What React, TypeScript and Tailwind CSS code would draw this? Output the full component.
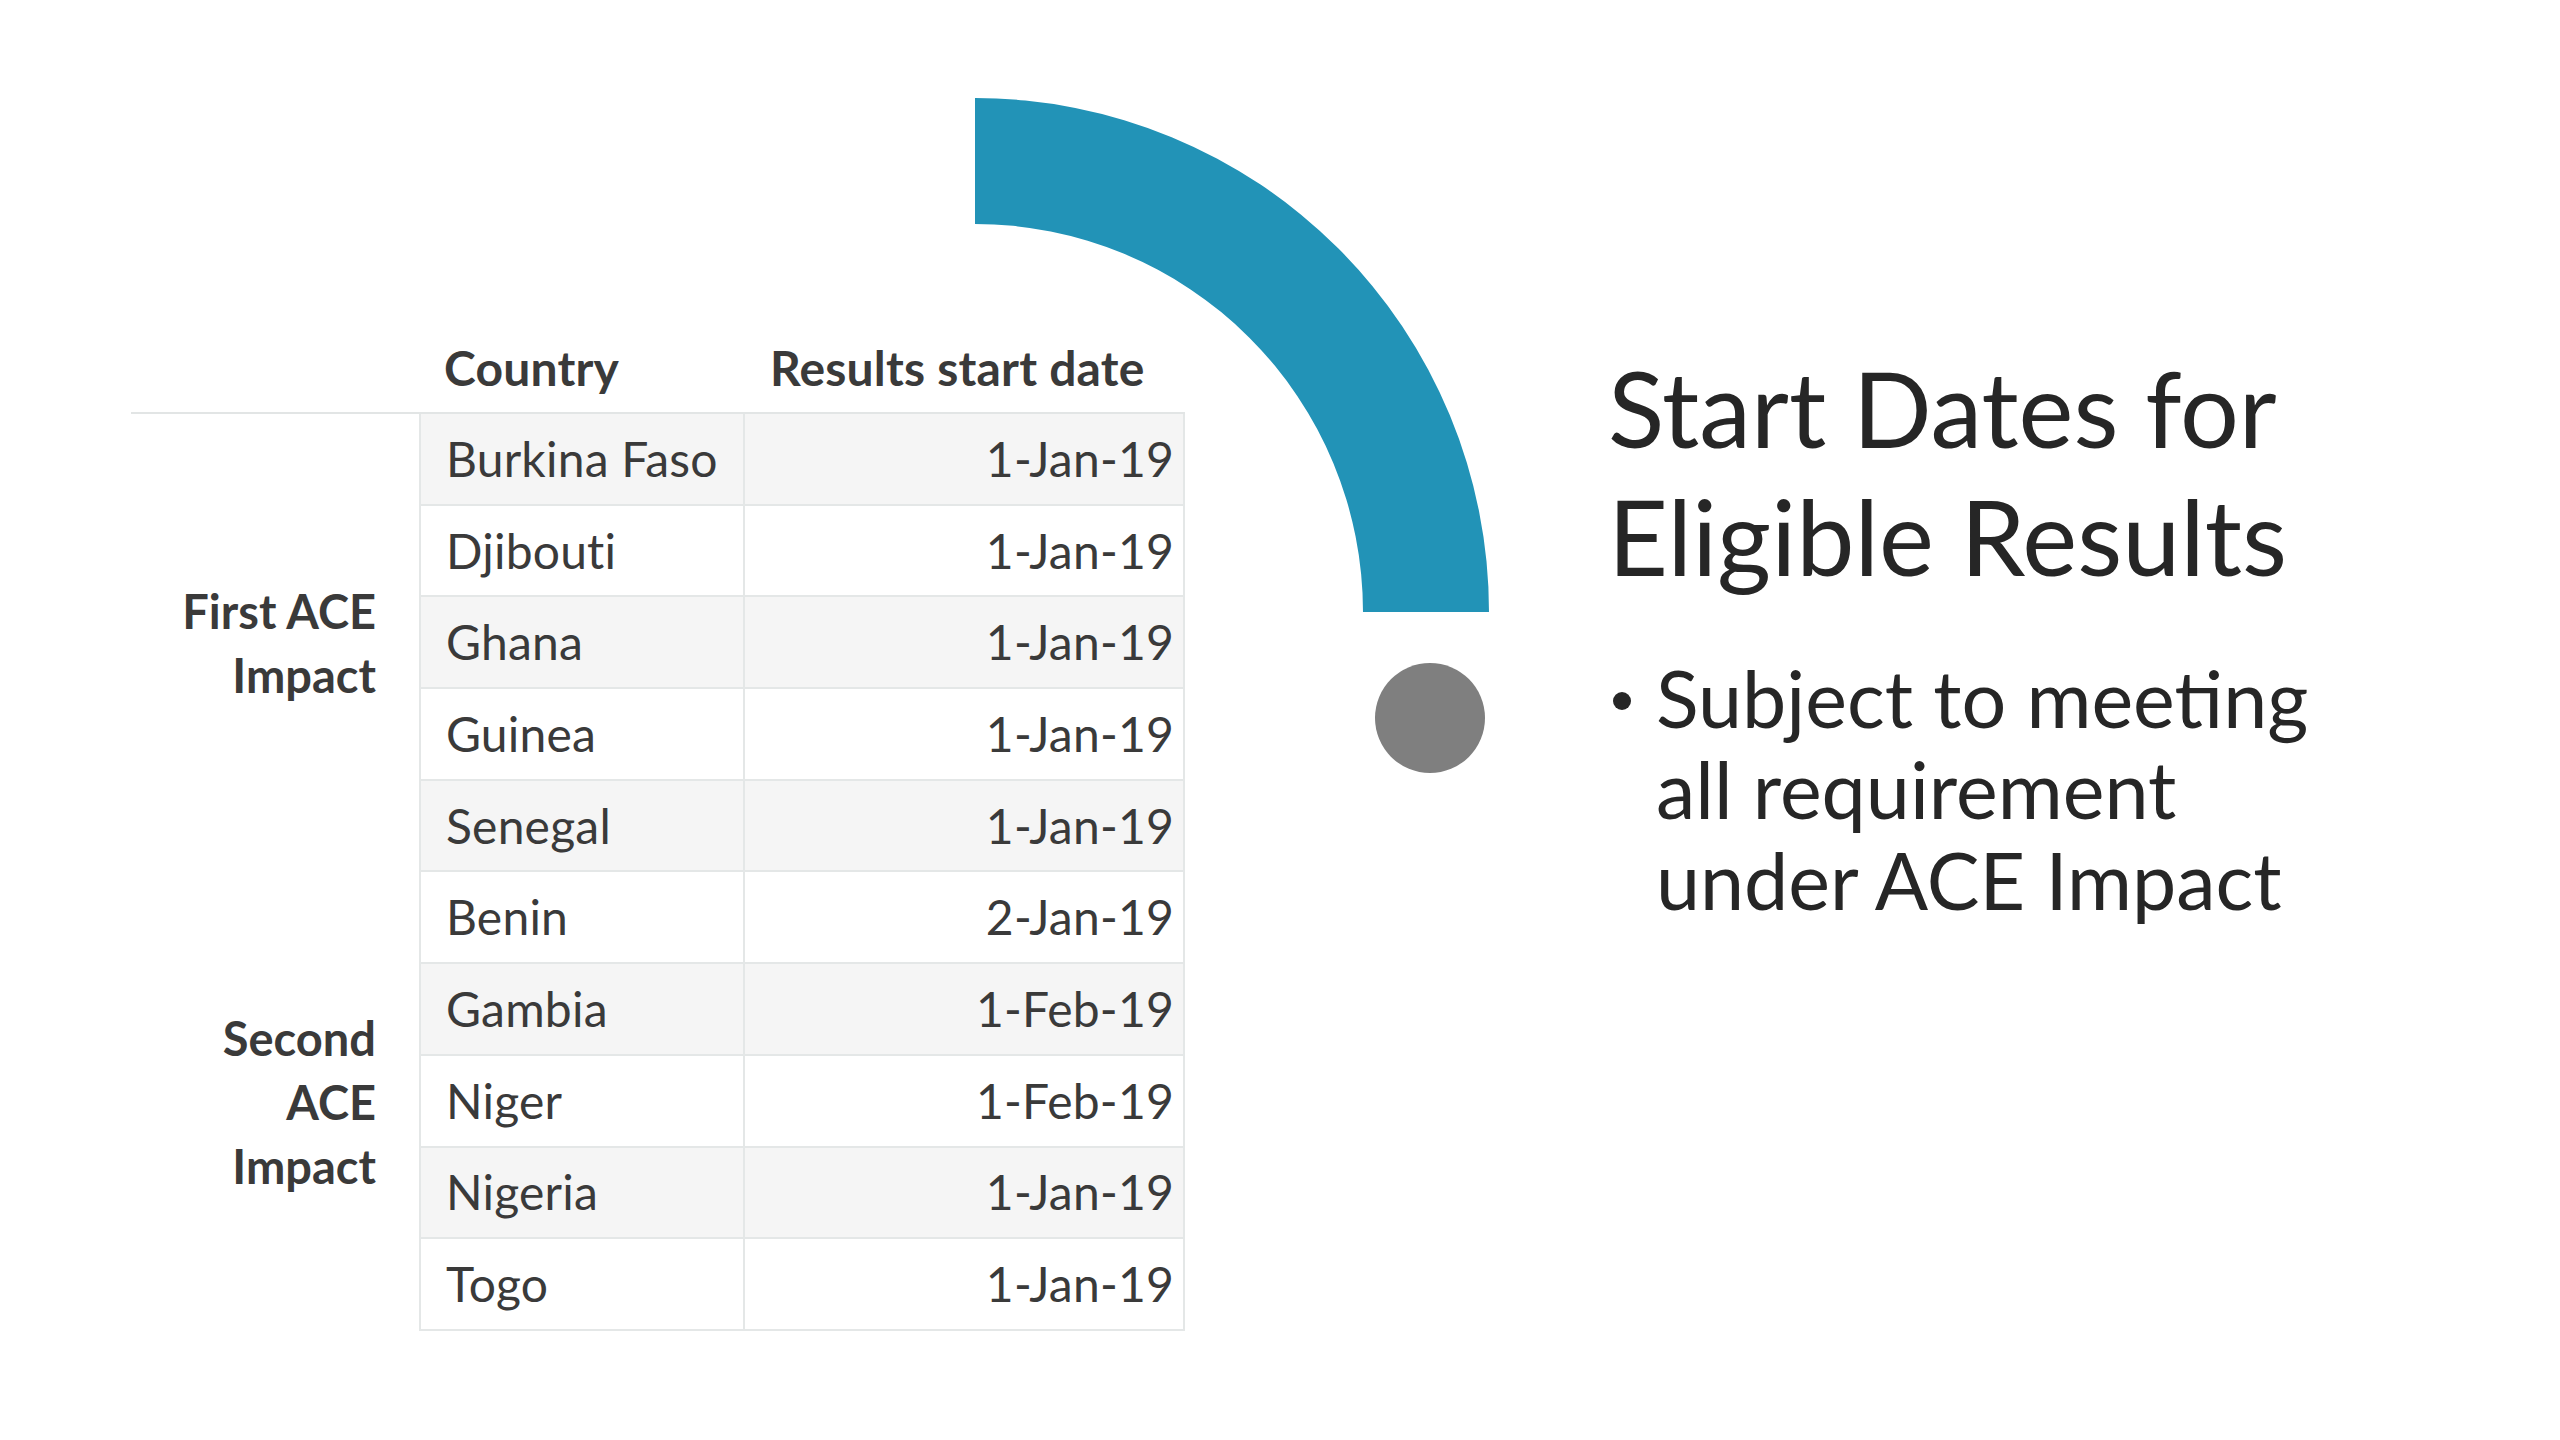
import React from "react";

const rows = [
  { country: "Burkina Faso", date: "1-Jan-19" },
  { country: "Djibouti", date: "1-Jan-19" },
  { country: "Ghana", date: "1-Jan-19" },
  { country: "Guinea", date: "1-Jan-19" },
  { country: "Senegal", date: "1-Jan-19" },
  { country: "Benin", date: "2-Jan-19" },
  { country: "Gambia", date: "1-Feb-19" },
  { country: "Niger", date: "1-Feb-19" },
  { country: "Nigeria", date: "1-Jan-19" },
  { country: "Togo", date: "1-Jan-19" },
];

function Arc() {
  return (
    <svg width="514" height="680" viewBox="0 0 514 680" className="absolute left-[975px] top-[98px]">
      <path d="M 0 0 A 514 514 0 0 1 514 514 L 388 514 A 388 388 0 0 0 0 126 Z" fill="#2293b7" />
      <circle cx="455" cy="620" r="55" fill="#7f7f7f" />
    </svg>
  );
}

export default function App() {
  return (
    <div className="relative w-[2560px] h-[1440px] bg-white overflow-hidden font-['Lato',sans-serif] text-[#3a3a3a]">
      <Arc />
      <div className="flex items-start">
        {/* Table */}
        <div className="ml-[131px] mt-[324px] grid grid-cols-[288px_324px_442px] grid-rows-[90px_repeat(10,91.7px)] text-[48px] tracking-[0.2px]">
          <div className="border-b-2 border-[#e2e5e5]" />
          <div className="border-b-2 border-[#e2e5e5] pl-[25px] flex items-center font-bold">Country</div>
          <div className="border-b-2 border-[#e2e5e5] pl-[27px] flex items-center font-bold">Results start date</div>

          <div className="row-start-2 row-span-5 col-start-1 flex items-center justify-end pr-[43px] text-right font-bold leading-[64px] text-[47px] tracking-normal">
            <span>First ACE<br />Impact</span>
          </div>
          <div className="row-start-7 row-span-5 col-start-1 flex items-center justify-end pr-[43px] text-right font-bold leading-[64px] text-[47px] tracking-normal">
            <span>Second<br />ACE<br />Impact</span>
          </div>

          {rows.map((r, i) => (
            <React.Fragment key={r.country}>
              <div
                className={`col-start-2 flex items-center pl-[25px] border-l-2 border-b-2 border-[#e4e7e7] ${i % 2 === 0 ? "bg-[#f5f5f5]" : "bg-white"}`}
              >
                {r.country}
              </div>
              <div
                className={`col-start-3 flex items-center justify-end pr-[9px] border-l-2 border-r-2 border-b-2 border-[#e4e7e7] ${i % 2 === 0 ? "bg-[#f5f5f5]" : "bg-white"}`}
              >
                {r.date}
              </div>
            </React.Fragment>
          ))}
        </div>

        {/* Title and bullet */}
        <div className="ml-[423px] mt-[344px] text-[#262626]">
          <h1 className="text-[104px] leading-[128px] font-normal">
            Start Dates for
            <br />
            Eligible Results
          </h1>
          <div className="mt-[52px] flex items-start">
            <span className="mt-[40px] ml-[5px] w-[18px] h-[18px] rounded-full bg-[#262626] shrink-0" />
            <p className="ml-[25px] text-[79px] leading-[91px]">
              Subject to meeting
              <br />
              all requirement
              <br />
              under ACE Impact
            </p>
          </div>
        </div>
      </div>
    </div>
  );
}
